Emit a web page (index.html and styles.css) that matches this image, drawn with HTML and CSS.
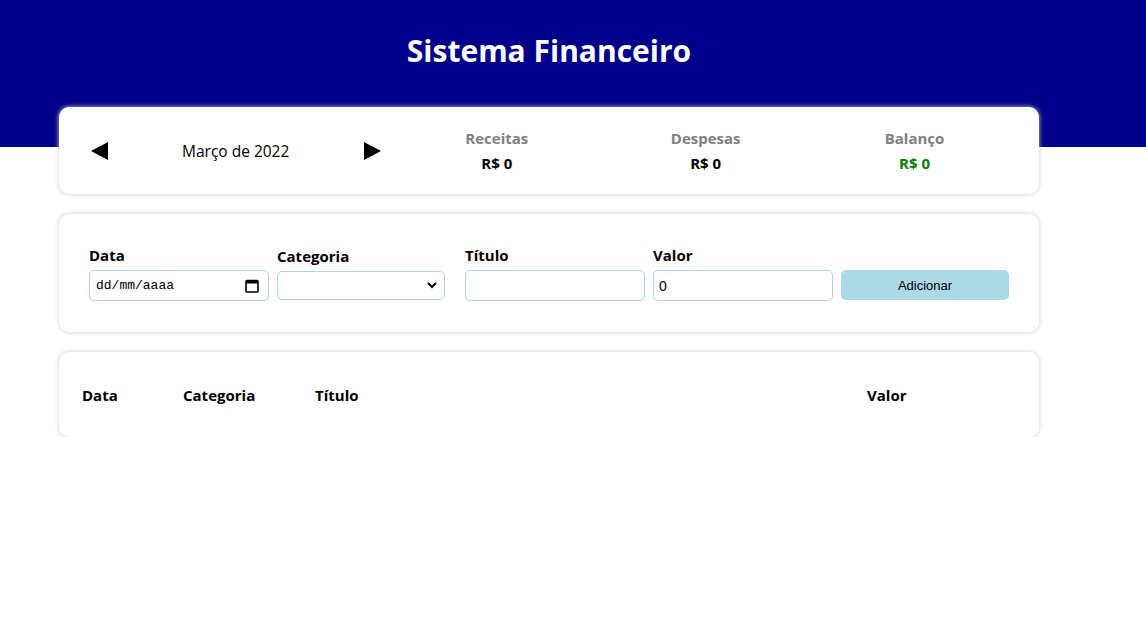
FILE: index.html
```html
<!DOCTYPE html>
<html lang="pt-BR">
<head>
<meta charset="utf-8">
<title>Sistema Financeiro</title>
<link rel="stylesheet" href="styles.css">
</head>
<body>
<header class="header">
  <div class="header-inner">
    <h1 class="title">Sistema Financeiro</h1>
  </div>
</header>
<main class="page">
  <section class="card info-card">
    <div class="month-area">
      <div class="arrow"><svg width="17" height="18" viewBox="0 0 17 18"><polygon points="17,0 17,18 0,9" fill="#000"/></svg></div>
      <div class="month-title">Março de 2022</div>
      <div class="arrow"><svg width="17" height="18" viewBox="0 0 17 18"><polygon points="0,0 0,18 17,9" fill="#000"/></svg></div>
    </div>
    <div class="resume-area">
      <div class="resume-item">
        <div class="resume-title">Receitas</div>
        <div class="resume-value">R$ 0</div>
      </div>
      <div class="resume-item">
        <div class="resume-title">Despesas</div>
        <div class="resume-value">R$ 0</div>
      </div>
      <div class="resume-item">
        <div class="resume-title">Balanço</div>
        <div class="resume-value green">R$ 0</div>
      </div>
    </div>
  </section>

  <section class="card form-card">
    <div class="field">
      <label class="field-label">Data</label>
      <div class="date-input">
        <span class="date-text">dd/mm/aaaa</span>
        <svg width="14" height="14" viewBox="0 0 14 14"><rect x="1" y="1.5" width="12" height="11.5" rx="1" fill="none" stroke="#000" stroke-width="1.6"/><rect x="1" y="1.5" width="12" height="3" fill="#000"/></svg>
      </div>
    </div>
    <div class="field">
      <label class="field-label">Categoria</label>
      <div class="select-input">
        <svg width="10" height="7" viewBox="0 0 10 7"><polyline points="1,1 5,5 9,1" fill="none" stroke="#000" stroke-width="2"/></svg>
      </div>
    </div>
    <div class="field wide-gap">
      <label class="field-label">Título</label>
      <input class="text-input" type="text">
    </div>
    <div class="field">
      <label class="field-label">Valor</label>
      <input class="text-input" type="text" value="0">
    </div>
    <div class="field">
      <label class="field-label">&nbsp;</label>
      <button class="add-btn">Adicionar</button>
    </div>
  </section>

  <section class="card table-card">
    <table class="table">
      <thead>
        <tr>
          <th class="col-date">Data</th>
          <th class="col-cat">Categoria</th>
          <th class="col-title">Título</th>
          <th class="col-value">Valor</th>
        </tr>
      </thead>
    </table>
  </section>
</main>
</body>
</html>
```
FILE: styles.css
```css
* { box-sizing: border-box; }
body {
  margin: 0;
  font-family: "Open Sans", "Noto Sans", sans-serif;
  background: #fff;
  color: #000;
}
.header {
  background: #00008B;
  height: 147px;
}
.header-inner {
  width: 980px;
  margin-left: 59px;
  padding-top: 29px;
  text-align: center;
}
.title {
  margin: 0;
  color: #fff;
  font-size: 30px;
  font-weight: 700;
  line-height: 44px;
}
.page {
  width: 980px;
  margin-left: 59px;
  margin-top: -40px;
  display: flex;
  flex-direction: column;
  gap: 20px;
}
.card {
  background: #fff;
  border-radius: 10px;
  box-shadow: 0 0 5px #ccc;
}
.info-card {
  display: flex;
  padding: 20px;
  height: 87px;
  align-items: center;
}
.month-area {
  flex: 1;
  display: flex;
  align-items: center;
}
.arrow {
  width: 40px;
  display: flex;
  justify-content: center;
}
.arrow svg { display: block; }
.month-title {
  flex: 1;
  text-align: center;
  font-size: 15.5px;
}
.resume-area {
  flex: 2;
  display: flex;
}
.resume-item {
  flex: 1;
  text-align: center;
}
.resume-title {
  color: gray;
  font-weight: 700;
  font-size: 15px;
  line-height: 20px;
  margin-bottom: 5px;
}
.resume-value {
  font-weight: 700;
  font-size: 15px;
  line-height: 20px;
}
.green { color: green; }

.form-card {
  display: flex;
  align-items: flex-end;
  padding: 32px 30px 31px;
  gap: 8px;
  height: 118px;
}
.field {
  display: flex;
  flex-direction: column;
}
.wide-gap { margin-left: 12px; }
.field-label {
  font-weight: 700;
  font-size: 15px;
  line-height: 20px;
  margin-bottom: 5px;
}
.date-input {
  width: 180px;
  height: 31px;
  border: 1px solid lightblue;
  border-radius: 5px;
  display: flex;
  align-items: center;
  justify-content: space-between;
  padding: 0 9px 0 6px;
}
.date-text {
  font-family: "Liberation Mono", monospace;
  font-size: 13px;
}
.date-input svg { display: block; }
.select-input {
  width: 168px;
  height: 29px;
  margin-bottom: 1px;
  border: 1px solid lightblue;
  border-radius: 5px;
  display: flex;
  align-items: center;
  justify-content: flex-end;
  padding-right: 7px;
}
.select-input svg { display: block; }
.text-input {
  width: 180px;
  height: 31px;
  border: 1px solid lightblue;
  border-radius: 5px;
  padding: 0 5px;
  font-family: "Liberation Sans", Arial, sans-serif;
  font-size: 14px;
  color: #000;
  outline: none;
}
.add-btn {
  width: 168px;
  height: 30px;
  margin-bottom: 1px;
  border: none;
  border-radius: 5px;
  background: lightblue;
  font-family: "Liberation Sans", Arial, sans-serif;
  font-size: 13px;
  color: #000;
}

.table-card {
  padding: 20px;
  height: 85px;
}
.table {
  width: 100%;
  border-spacing: 2px;
}
.table th {
  text-align: left;
  font-size: 15px;
  font-weight: 700;
  padding: 11px 1px 9px;
  line-height: 21px;
}
.col-date { width: 99px; }
.col-cat { width: 130px; }
.col-title { width: 550px; }
```
